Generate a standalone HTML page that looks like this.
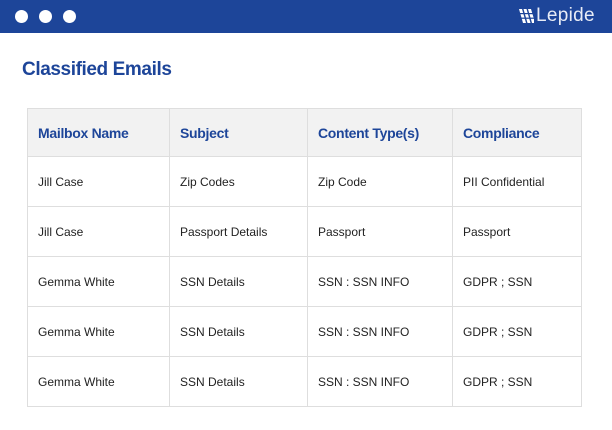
<!DOCTYPE html>
<html><head><style>
body{margin:0;width:612px;height:430px;background:#fff;font-family:"Liberation Sans",sans-serif;position:relative;overflow:hidden}
.bar{position:absolute;left:0;top:0;width:612px;height:33px;background:#1d4599}
.dot{position:absolute;top:10px;width:13px;height:13px;border-radius:50%;background:#fff}
.logo{position:absolute;left:536px;top:5px;color:#e8ecf6;font-size:19px;font-weight:normal;letter-spacing:0.3px}
h1{position:absolute;left:22px;top:59px;margin:0;font-size:19px;color:#1d4599;font-weight:bold;letter-spacing:-0.4px}
table{position:absolute;left:27px;top:108px;border-collapse:collapse;width:555px}
td,th{border:1px solid #dedede;text-align:left;padding:0 0 0 10px;height:49px;font-size:12px;color:#222}
th{background:#f2f2f2;color:#1d4599;font-size:14px;height:47px;letter-spacing:-0.3px}
</style></head><body>
<div class="bar">
<div class="dot" style="left:15px"></div><div class="dot" style="left:39px"></div><div class="dot" style="left:63px"></div>
<svg style="position:absolute;left:519px;top:9px" width="15" height="14" viewBox="0 0 15 14"><g fill="#fff"><polygon points="0,0 3,0 7,14 4,14"/><polygon points="4.5,0 7.5,0 11.5,14 8.5,14"/><polygon points="9,0 12,0 15,10 15,14 13,14"/></g><rect x="0" y="4" width="15" height="1.2" fill="#1d4599"/><rect x="0" y="8.6" width="15" height="1.2" fill="#1d4599"/></svg>
<div class="logo">Lepide</div>
</div>
<h1>Classified Emails</h1>
<table>
<colgroup><col style="width:142px"><col style="width:138px"><col style="width:145px"><col></colgroup>
<tr><th>Mailbox Name</th><th>Subject</th><th>Content Type(s)</th><th>Compliance</th></tr>
<tr><td>Jill Case</td><td>Zip Codes</td><td>Zip Code</td><td>PII Confidential</td></tr>
<tr><td>Jill Case</td><td>Passport Details</td><td>Passport</td><td>Passport</td></tr>
<tr><td>Gemma White</td><td>SSN Details</td><td>SSN : SSN INFO</td><td>GDPR ; SSN</td></tr>
<tr><td>Gemma White</td><td>SSN Details</td><td>SSN : SSN INFO</td><td>GDPR ; SSN</td></tr>
<tr><td>Gemma White</td><td>SSN Details</td><td>SSN : SSN INFO</td><td>GDPR ; SSN</td></tr>
</table>
</body></html>
